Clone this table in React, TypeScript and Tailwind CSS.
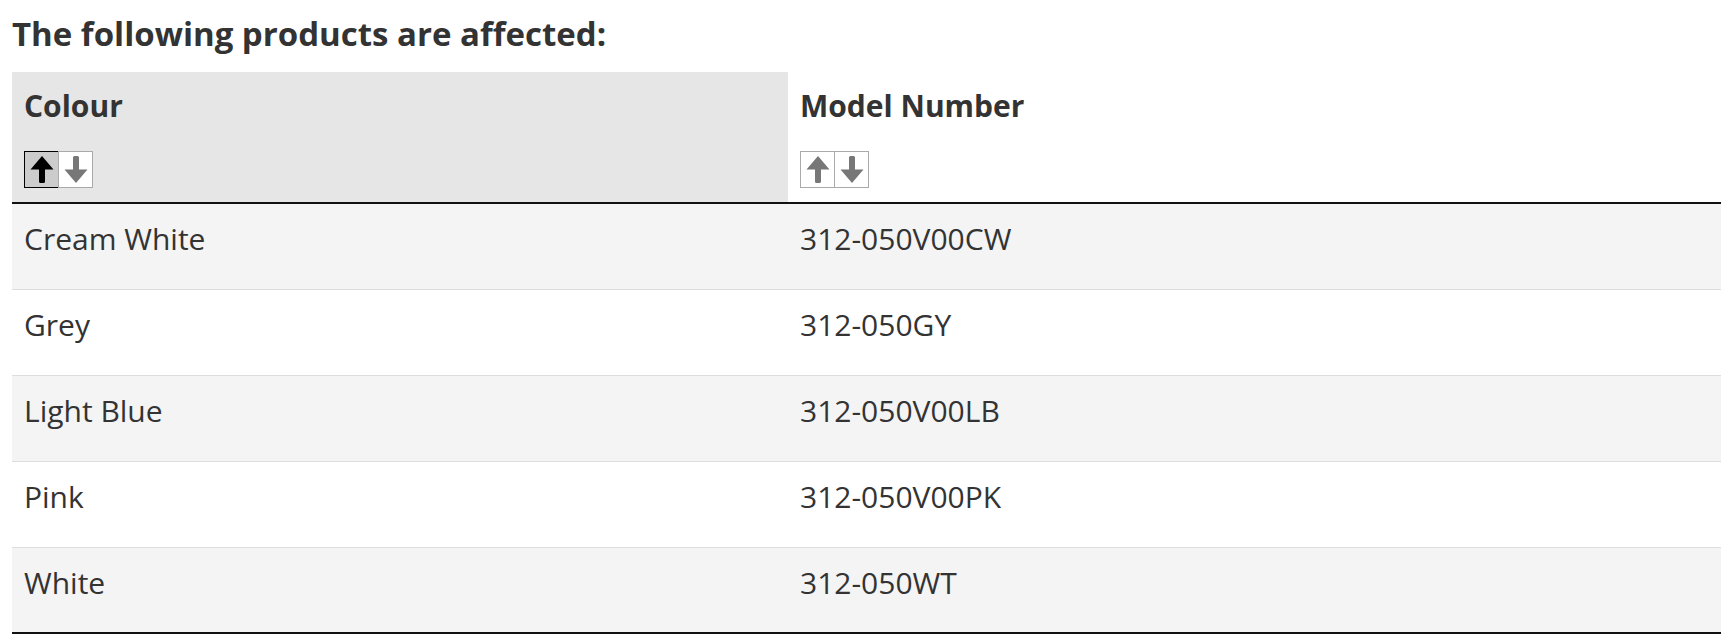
import React from "react";

interface Product {
  colour: string;
  model: string;
}

const products: Product[] = [
  { colour: "Cream White", model: "312-050V00CW" },
  { colour: "Grey", model: "312-050GY" },
  { colour: "Light Blue", model: "312-050V00LB" },
  { colour: "Pink", model: "312-050V00PK" },
  { colour: "White", model: "312-050WT" },
];

function Arrow({ down = false, active = false }: { down?: boolean; active?: boolean }) {
  return (
    <svg
      width="24"
      height="29"
      viewBox="0 0 24 29"
      className={down ? "rotate-180" : ""}
      fill={active ? "#000000" : "#777777"}
    >
      <path d="M12 1 L23.5 14.5 L15 14.5 L15 26.5 Q15 28 13.5 28 L10.5 28 Q9 28 9 26.5 L9 14.5 L0.5 14.5 Z" />
    </svg>
  );
}

function SortButtons({ active }: { active?: "up" | "down" }) {
  return (
    <div className="flex mt-[23px]">
      <button
        className={`w-[35px] h-[37px] flex items-center justify-center border ${
          active === "up" ? "bg-[#cccccc] border-black" : "bg-white border-[#aaaaaa]"
        }`}
        title="Sort ascending"
      >
        <Arrow active={active === "up"} />
      </button>
      <button
        className={`w-[35px] h-[37px] -ml-px flex items-center justify-center border ${
          active === "down" ? "bg-[#cccccc] border-black" : "bg-white border-[#aaaaaa]"
        }`}
        title="Sort descending"
      >
        <Arrow down active={active === "down"} />
      </button>
    </div>
  );
}

export default function App() {
  return (
    <div className="bg-white min-h-[640px] text-[#333333] font-['Open_Sans',sans-serif]">
      <h2 className="pl-3 pt-[10px] text-[33px] leading-[48px] font-bold">
        The following products are affected:
      </h2>

      <table className="ml-3 mt-[14px] w-[1709px] table-fixed border-separate border-spacing-0">
        <colgroup>
          <col className="w-[776px]" />
          <col />
        </colgroup>
        <thead>
          <tr>
            <th className="bg-[#e6e6e6] h-[132px] px-3 pt-[11px] pb-[14px] align-top text-left border-b-2 border-[#111111]">
              <div className="text-[30px] leading-[45px] font-bold">Colour</div>
              <SortButtons active="up" />
            </th>
            <th className="bg-white h-[132px] px-3 pt-[11px] pb-[14px] align-top text-left border-b-2 border-[#111111]">
              <div className="text-[30px] leading-[45px] font-bold">Model Number</div>
              <SortButtons />
            </th>
          </tr>
        </thead>
        <tbody>
          {products.map((p, i) => {
            const last = i === products.length - 1;
            const rowBg = i % 2 === 0 ? "bg-[#f4f4f4]" : "bg-white";
            const border = last ? "border-b-2 border-[#111111]" : "border-b border-[#dddddd]";
            return (
              <tr key={p.model} className={rowBg}>
                <td className={`h-[86px] px-3 pt-[12px] align-top text-[30px] leading-[45px] ${border}`}>
                  {p.colour}
                </td>
                <td className={`h-[86px] px-3 pt-[12px] align-top text-[30px] leading-[45px] ${border}`}>
                  {p.model}
                </td>
              </tr>
            );
          })}
        </tbody>
      </table>
    </div>
  );
}
